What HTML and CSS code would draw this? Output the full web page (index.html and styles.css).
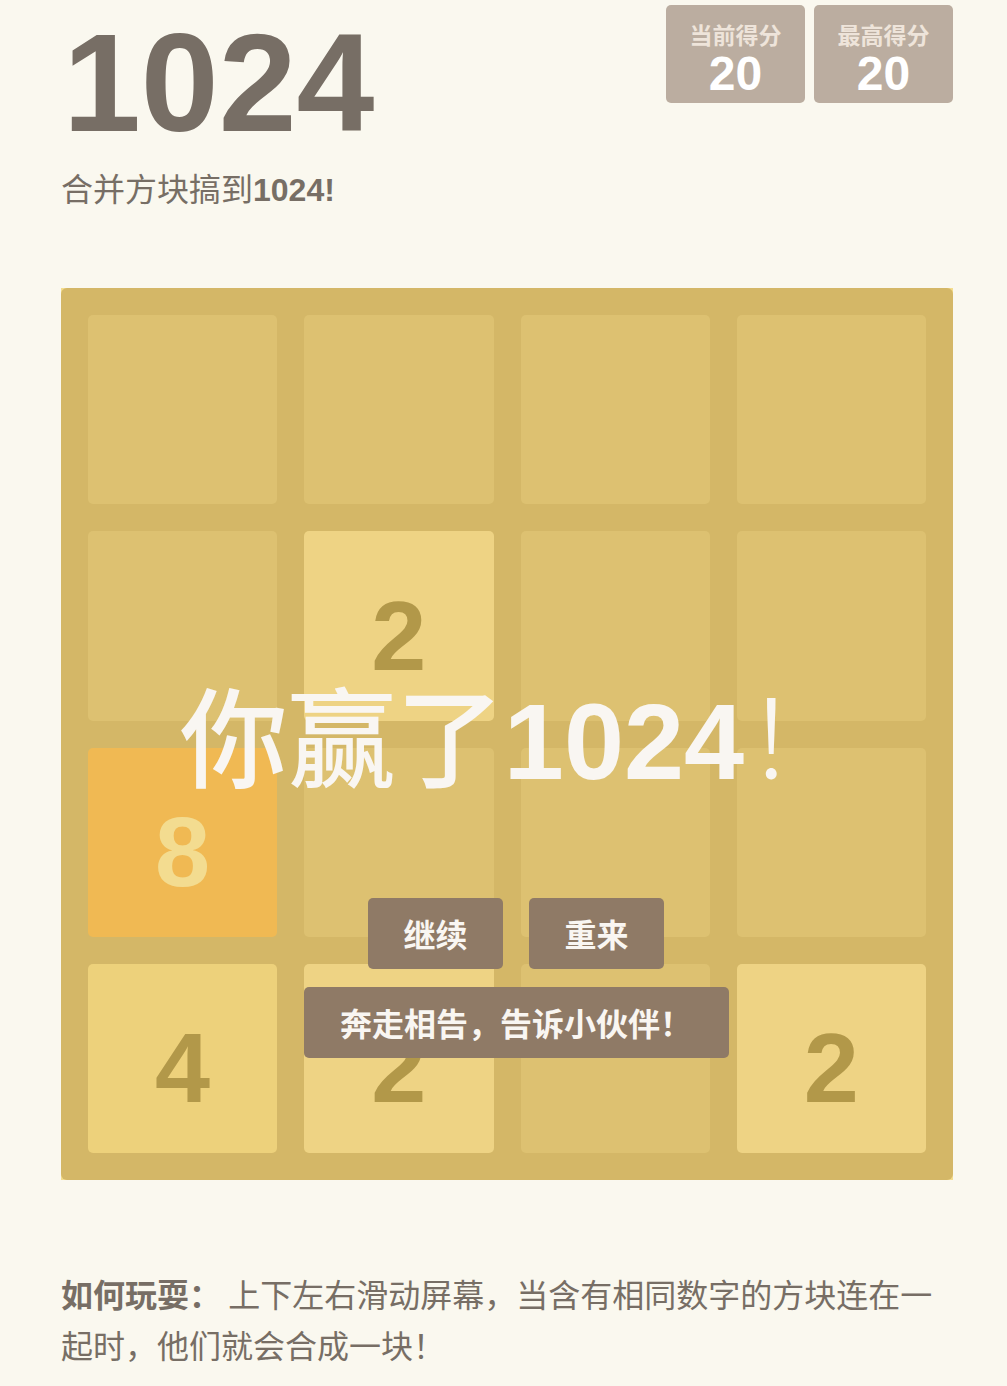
FILE: index.html
```html
<!DOCTYPE html>
<html lang="zh-CN">
<head>
<meta charset="utf-8">
<title>1024</title>
<link rel="stylesheet" href="styles.css">
</head>
<body>
<div class="page">
  <header class="heading">
    <h1 class="title">1024</h1>
    <div class="scores">
      <div class="score-box">
        <div class="score-label">当前得分</div>
        <div class="score-value">20</div>
      </div>
      <div class="score-box">
        <div class="score-label">最高得分</div>
        <div class="score-value">20</div>
      </div>
    </div>
  </header>
  <p class="intro">合并方块搞到<strong class="latin-bold">1024!</strong></p>

  <div class="game">
    <div class="grid">
      <div class="cell"></div>
      <div class="cell"></div>
      <div class="cell"></div>
      <div class="cell"></div>

      <div class="cell"></div>
      <div class="tile t2">2</div>
      <div class="cell"></div>
      <div class="cell"></div>

      <div class="tile t8">8</div>
      <div class="cell"></div>
      <div class="cell"></div>
      <div class="cell"></div>

      <div class="tile t4">4</div>
      <div class="tile t2">2</div>
      <div class="cell"></div>
      <div class="tile t2">2</div>
    </div>

    <div class="message">
      <p class="message-title"><span class="cjk">你赢了</span>1024<span class="cjk bang">！</span></p>
      <div class="actions">
        <a class="btn btn-small">继续</a>
        <a class="btn btn-small">重来</a>
      </div>
      <a class="btn btn-wide">奔走相告，告诉小伙伴！</a>
    </div>
  </div>

  <p class="explanation"><strong>如何玩耍：</strong> 上下左右滑动屏幕，当含有相同数字的方块连在一起时，他们就会合成一块！</p>
</div>
</body>
</html>
```

FILE: styles.css
```css
html, body {
  margin: 0;
  padding: 0;
}

body {
  background: #faf8ef;
  color: #776e65;
  font-family: "Liberation Sans", "Noto Sans CJK SC", sans-serif;
}

.page {
  width: 892px;
  padding: 5px 0 40px 61px;
}

.heading {
  display: flex;
  justify-content: space-between;
  align-items: flex-start;
}

.title {
  margin: 8px 0 0 2px;
  font-size: 140px;
  line-height: 140px;
  font-weight: bold;
  color: #776e65;
}

.scores {
  display: flex;
  gap: 9px;
}

.score-box {
  width: 139px;
  height: 98px;
  box-sizing: border-box;
  padding-top: 16px;
  background: #bbada0;
  border-radius: 5px;
  text-align: center;
}

.score-label {
  font-family: "Noto Sans CJK SC", sans-serif;
  font-size: 23px;
  line-height: 26px;
  font-weight: bold;
  color: #eee4da;
}

.score-value {
  font-size: 48px;
  line-height: 48px;
  font-weight: bold;
  color: #ffffff;
  margin-top: 3px;
}

.intro {
  margin: 9px 0 0 0;
  font-size: 32px;
  line-height: 51px;
  font-family: "Noto Sans CJK SC", sans-serif;
}

.latin-bold {
  font-family: "Liberation Sans", sans-serif;
  font-weight: bold;
}

.game {
  position: relative;
  margin-top: 72px;
  width: 892px;
  height: 892px;
  background: #bbada0;
  border-radius: 6px;
}

.grid {
  display: grid;
  grid-template-columns: repeat(4, 1fr);
  grid-template-rows: repeat(4, 1fr);
  gap: 27px;
  padding: 27px;
  box-sizing: border-box;
  width: 100%;
  height: 100%;
}

.cell {
  background: rgba(238, 228, 218, 0.35);
  border-radius: 5px;
}

.tile {
  border-radius: 5px;
  display: flex;
  align-items: center;
  justify-content: center;
  box-sizing: border-box;
  padding-top: 20px;
  font-size: 99px;
  font-weight: bold;
  color: #776e65;
}

.t2 { background: #eee4da; }
.t4 { background: #ede0c8; }
.t8 { background: #f2b179; color: #f9f6f2; }

.message {
  position: absolute;
  inset: 0;
  background: rgba(237, 194, 46, 0.5);
  display: flex;
  flex-direction: column;
  align-items: center;
  padding-left: 18px;
}

.message-title {
  margin: 390px 0 0 0;
  font-size: 108px;
  line-height: 108px;
  font-weight: bold;
  color: #f9f6f2;
  white-space: nowrap;
}

.message-title .cjk {
  font-family: "Noto Sans CJK SC", sans-serif;
  font-weight: 500;
}

.message-title .bang {
  font-weight: 300;
}

.actions {
  display: flex;
  gap: 26px;
  margin-top: 102px;
}

.btn {
  display: block;
  background: #8f7a66;
  color: #f9f6f2;
  border-radius: 5px;
  height: 71px;
  line-height: 71px;
  text-align: center;
  font-family: "Noto Sans CJK SC", sans-serif;
  font-weight: bold;
  font-size: 32px;
}

.btn-small {
  width: 135px;
}

.btn-wide {
  width: 425px;
  margin-top: 18px;
}

.explanation {
  margin: 88px 0 0 0;
  font-size: 32px;
  line-height: 51px;
  font-family: "Noto Sans CJK SC", sans-serif;
  color: #776e65;
}

.explanation strong {
  font-weight: bold;
}
```
